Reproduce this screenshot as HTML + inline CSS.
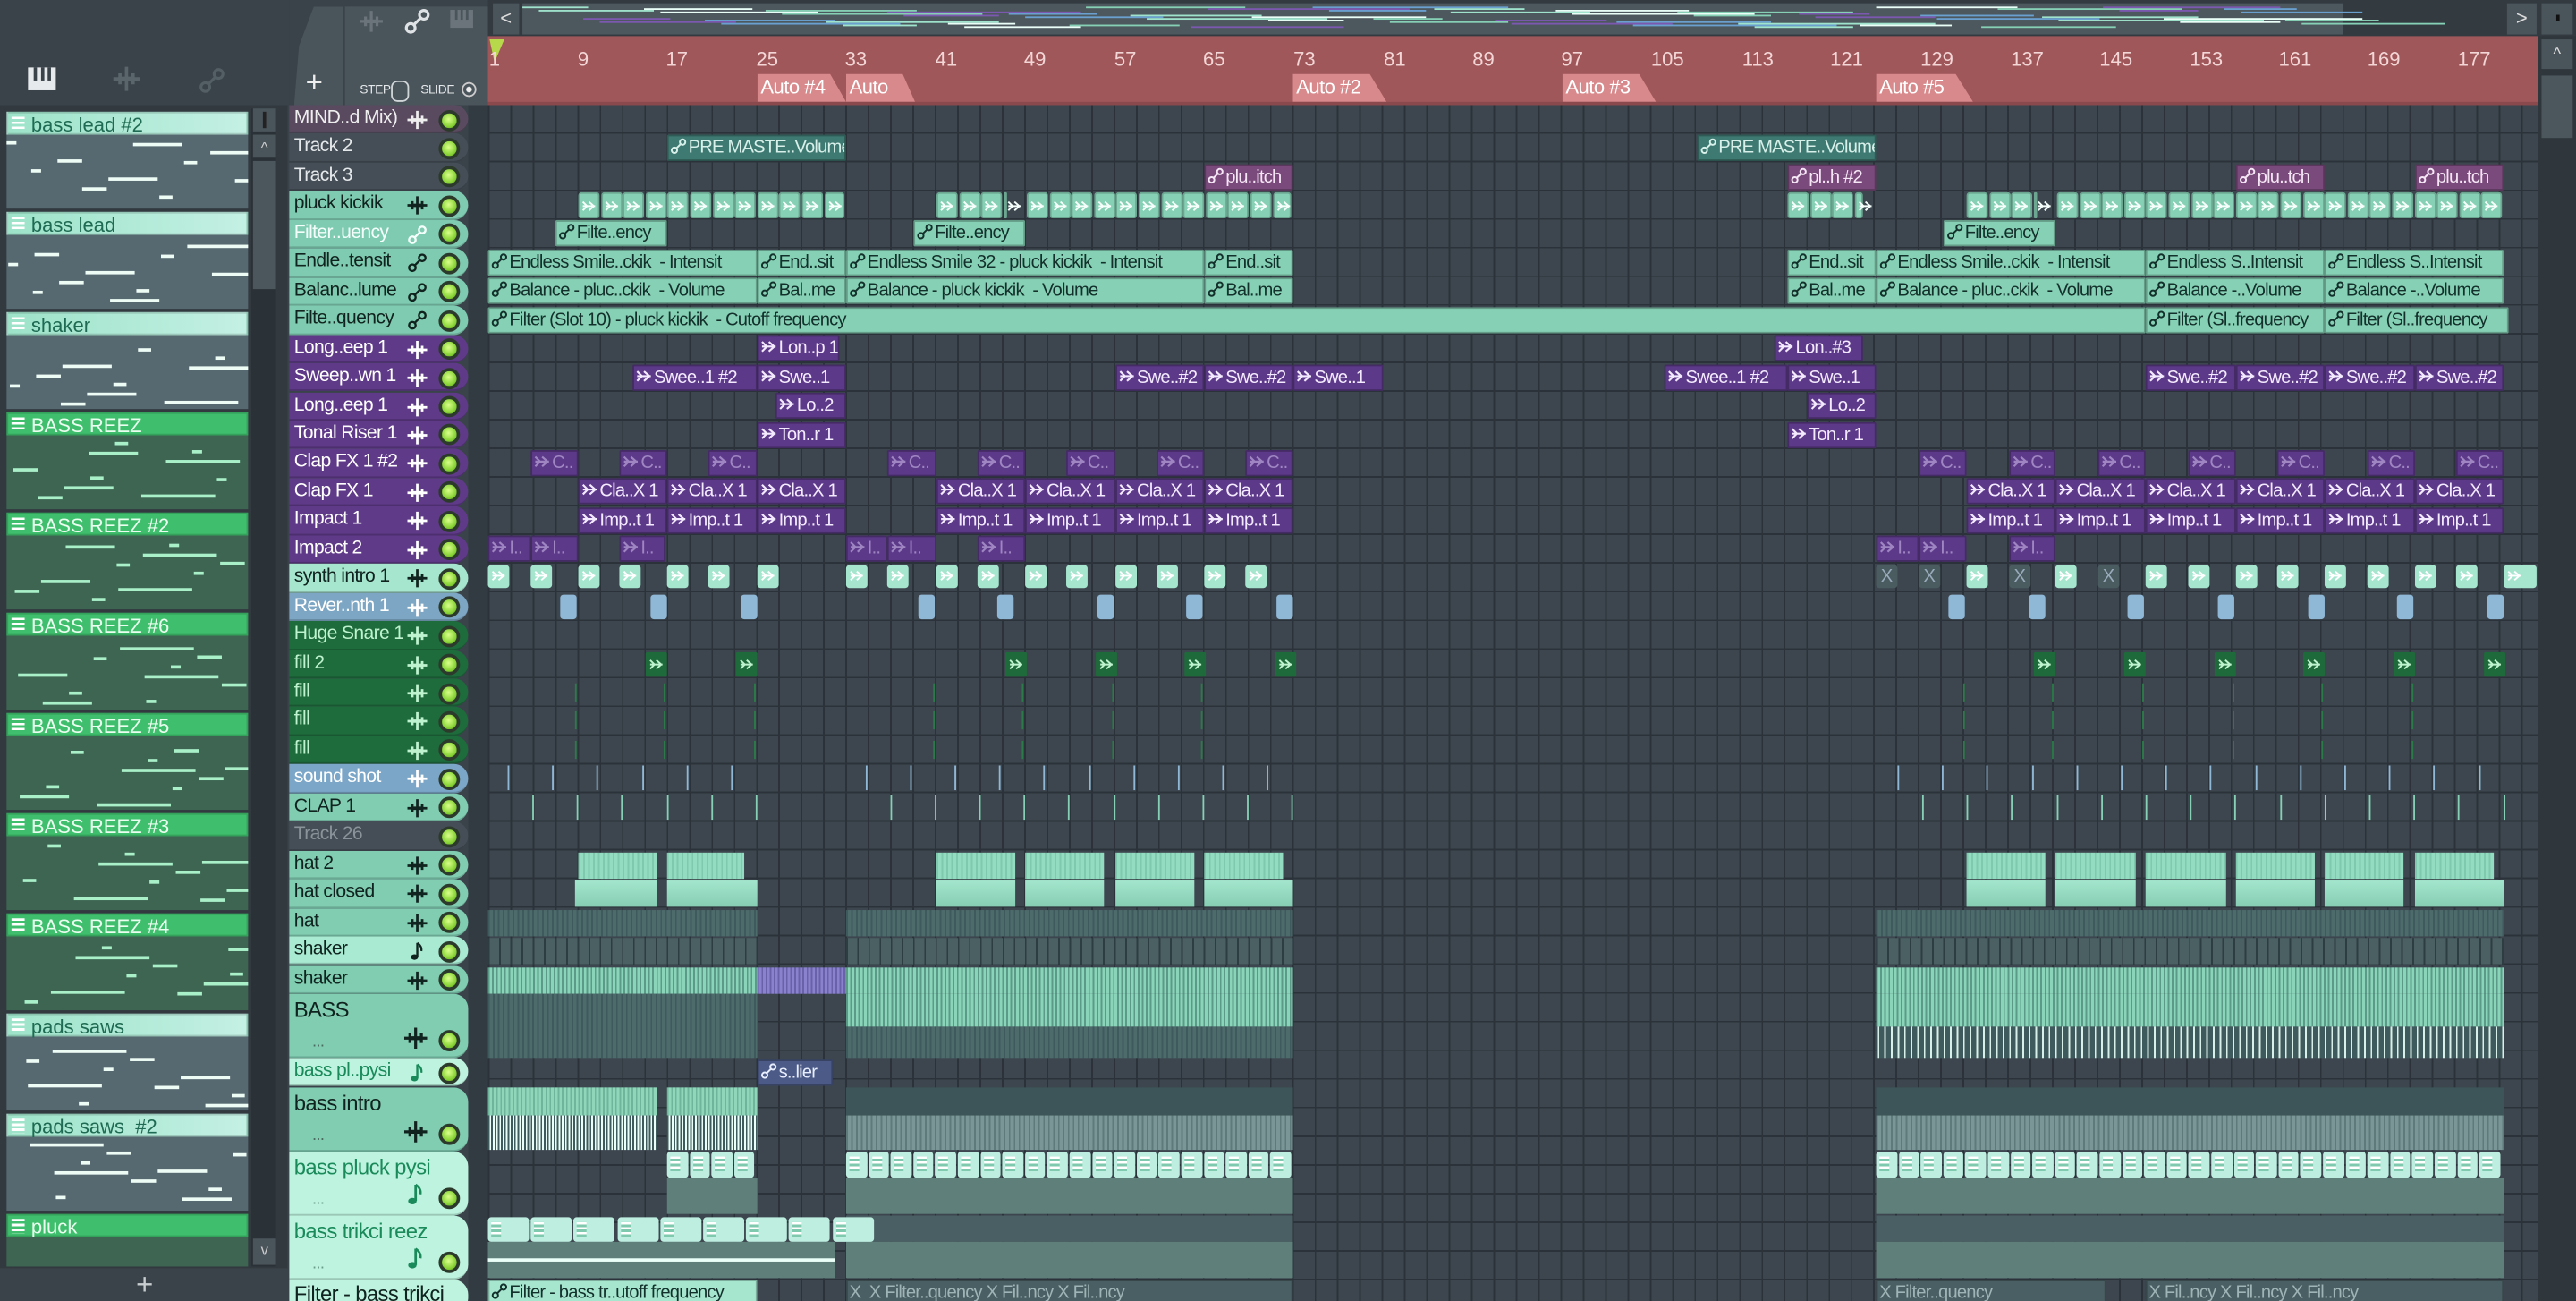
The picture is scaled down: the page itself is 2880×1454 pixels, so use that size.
<!DOCTYPE html>
<html><head><meta charset="utf-8">
<style>
html,body{margin:0;padding:0;width:2880px;height:1454px;overflow:hidden;background:#3a434a}
#root{position:absolute;left:0;top:0;width:1568px;height:792px;transform:scale(1.83673,1.83586);transform-origin:0 0;font-family:"Liberation Sans Narrow","Liberation Sans",sans-serif;overflow:hidden;background:#3a434a}
.a{position:absolute}
#grid{position:absolute;left:297px;top:64px;width:1248px;height:728px;background-color:#3d464f;
background-image:repeating-linear-gradient(90deg,#2b3239 0 1px,transparent 1px 13.6px),repeating-linear-gradient(180deg,transparent 0 16.45px,#2b3239 16.45px 17.45px);}
.th{position:absolute;left:176px;width:109px;height:17.45px;border-radius:0 9px 9px 0;font-size:11.5px;letter-spacing:-0.35px;line-height:17px;box-sizing:border-box;padding-left:3px;white-space:nowrap;border-bottom:1px solid rgba(0,0,0,.18)}
.th .ic{position:absolute;left:72px;top:3px;width:12px;height:12px}
.th .led{position:absolute;left:91px;top:2.5px;width:9px;height:9px;border-radius:50%;background:radial-gradient(circle at 45% 40%,#d9ff8a,#8ad437 60%,#5a9a20);border:2px solid #2c3a2c}
.c{position:absolute;height:16px;box-sizing:border-box;font-size:11px;letter-spacing:-0.45px;line-height:15px;white-space:nowrap;overflow:hidden;padding-left:1px;border:1px solid rgba(0,0,0,.25);border-radius:1px}
.c svg{width:10px;height:10px;vertical-align:-1px;margin-right:1px}
.t{background:#86d0b5;color:#13302a}
.dt{background:#3e7a72;color:#d8f0ea}
.pg{background:#7a4a7c;color:#f5e6f5}
.p{background:#5d3a89;color:#f4eaff}
.pd{background:#5d3a89;color:#9f86c3}
.num{position:absolute;top:29px;font-size:12px;color:#f3d6d6;width:30px;margin-left:-15px;text-align:center}
.mk{position:absolute;top:45px;height:17px;background:#d7898b;color:#fff;font-size:12px;letter-spacing:-0.3px;line-height:17px;padding-left:2px;clip-path:polygon(0 0,82% 0,100% 100%,0 100%)}
.pat{position:absolute;left:4px;width:147px;height:59px;background:#566870}
.ph{position:absolute;left:0;top:0;width:147px;height:14px;box-sizing:border-box;font-size:12px;line-height:14px;padding-left:14px;border:1px solid rgba(0,0,0,.15)}
.ph:before{content:"";position:absolute;left:2px;top:2px;width:8px;height:9px;background:repeating-linear-gradient(180deg,#fff 0 1.5px,transparent 1.5px 3px);}
.lg{background:linear-gradient(90deg,#9de3c9,#c4f0e4);color:#1f6a52}
.gg{background:#3fbf6d;color:#eaffef}
.gb{background:#3d6552}
.n{position:absolute;height:2px;background:#eefcf6}
</style></head><body><div id="root">
<svg width="0" height="0" style="position:absolute">
<defs>
<symbol id="au" viewBox="0 0 12 12"><circle cx="3" cy="9" r="2" fill="none" stroke="currentColor" stroke-width="1.3"/><circle cx="9" cy="3" r="2" fill="none" stroke="currentColor" stroke-width="1.3"/><path d="M4.4 7.6L7.6 4.4" stroke="currentColor" stroke-width="1.3"/></symbol>
<symbol id="ar" viewBox="0 0 12 12"><path d="M1 6H11M6 2.5L10 6L6 9.5M1 2.5L4.5 6L1 9.5" fill="none" stroke="currentColor" stroke-width="1.4"/></symbol>
<symbol id="wv" viewBox="0 0 12 12"><path d="M0 6H12M3 3.5V8.5M6 0.5V11.5M9 3.5V8.5M4.5 5V7M7.5 5V7" fill="none" stroke="currentColor" stroke-width="1.5"/></symbol>
<symbol id="nt" viewBox="0 0 12 12"><path d="M6 1V9.5" stroke="currentColor" stroke-width="1.3"/><ellipse cx="4.3" cy="9.6" rx="2.2" ry="1.7" fill="currentColor"/><path d="M6 1Q9 3 8.5 6" fill="none" stroke="currentColor" stroke-width="1.2"/></symbol>
</defs></svg>

<div class="a" style="left:0;top:0;width:176px;height:64px;background:#3a4349"></div>
<svg class="a" style="left:17px;top:41px" width="17" height="14" viewBox="0 0 17 14"><rect x="0" y="0" width="17" height="14" fill="#e6eaec"/><rect x="3.5" y="0" width="2" height="8" fill="#3a4349"/><rect x="8" y="0" width="2" height="8" fill="#3a4349"/><rect x="12" y="0" width="2" height="8" fill="#3a4349"/></svg>
<svg class="a" style="left:66px;top:40px;color:#59646b" width="22" height="16"><use href="#wv"/></svg>
<svg class="a" style="left:121px;top:41px;color:#535e65" width="16" height="16"><use href="#au"/></svg>
<div class="a" style="left:0;top:64px;width:175px;height:711px;background:#323a40"></div>

<div class="pat" style="top:68px"><div class="ph lg">bass lead #2</div></div>
<div class="pat" style="top:129px"><div class="ph lg">bass lead</div></div>
<div class="pat" style="top:190px"><div class="ph lg">shaker</div></div>
<div class="pat gb" style="top:251px"><div class="ph gg">BASS REEZ</div></div>
<div class="pat gb" style="top:312px"><div class="ph gg">BASS REEZ #2</div></div>
<div class="pat gb" style="top:373px"><div class="ph gg">BASS REEZ #6</div></div>
<div class="pat gb" style="top:434px"><div class="ph gg">BASS REEZ #5</div></div>
<div class="pat gb" style="top:495px"><div class="ph gg">BASS REEZ #3</div></div>
<div class="pat gb" style="top:556px"><div class="ph gg">BASS REEZ #4</div></div>
<div class="pat" style="top:617px"><div class="ph lg">pads saws</div></div>
<div class="pat" style="top:678px"><div class="ph lg">pads saws &nbsp;#2</div></div>
<div class="pat gb" style="top:739px;height:32px"><div class="ph gg">pluck</div></div>
<div id="notes"></div>
<div class="a" style="left:153px;top:66px;width:15px;height:705px;background:#2b3237"></div>
<div class="a" style="left:154px;top:66px;width:14px;height:14px;background:#4a545b"></div>
<div class="a" style="left:160px;top:68px;width:2px;height:10px;background:#222"></div>
<div class="a" style="left:154px;top:82px;width:14px;height:14px;background:#4a545b;color:#ccc;font-size:9px;text-align:center;line-height:16px">^</div>
<div class="a" style="left:154px;top:98px;width:14px;height:78px;background:#4c565d"></div>
<div class="a" style="left:154px;top:754px;width:14px;height:16px;background:#4a545b;color:#ccc;font-size:9px;text-align:center;line-height:14px">v</div>
<div class="a" style="left:0;top:772px;width:176px;height:20px;background:#3a4349;color:#c8cdd0;font-size:18px;text-align:center;line-height:20px;font-family:'Liberation Sans',sans-serif">+</div>

<div class="a" style="left:176px;top:0;width:121px;height:64px;background:#3a4349"></div>
<div class="a" style="left:179px;top:4px;width:30px;height:60px;background:#4a545b;clip-path:polygon(40% 0,100% 0,100% 100%,0 100%,10% 40%)"></div>
<div class="a" style="left:186px;top:40px;color:#eee;font-size:18px;font-family:'Liberation Sans',sans-serif">+</div>
<div class="a" style="left:210px;top:4px;width:87px;height:60px;background:#4a545b"></div>
<svg class="a" style="left:216px;top:6px;color:#6a747a" width="20" height="14"><use href="#wv"/></svg>
<svg class="a" style="left:246px;top:5px;color:#dfe3e5" width="16" height="16"><use href="#au"/></svg>
<svg class="a" style="left:274px;top:6px" width="14" height="11" viewBox="0 0 14 11"><rect width="14" height="11" fill="#6a747a"/><rect x="3" y="0" width="1.5" height="6" fill="#4a545b"/><rect x="6.3" y="0" width="1.5" height="6" fill="#4a545b"/><rect x="9.6" y="0" width="1.5" height="6" fill="#4a545b"/></svg>
<div class="a" style="left:219px;top:50px;color:#e4e8ea;font-size:7.5px;letter-spacing:-0.2px">STEP</div>
<div class="a" style="left:238px;top:49px;width:9px;height:11px;border:1.3px solid #d0d5d8;border-radius:4px"></div>
<div class="a" style="left:256px;top:50px;color:#e4e8ea;font-size:7.5px;letter-spacing:-0.2px">SLIDE</div>
<div class="a" style="left:281px;top:50px;width:7px;height:7px;border:1px solid #ccc;border-radius:50%;background:radial-gradient(#eee 30%,transparent 40%)"></div>

<div class="a" style="left:297px;top:0;width:1271px;height:22px;background:#333b41"></div>
<div class="a" style="left:300px;top:2px;width:16px;height:19px;background:#4a545b;color:#ddd;font-size:12px;text-align:center;line-height:19px">&lt;</div>
<div class="a" style="left:318px;top:2px;width:1108px;height:19px;background:#4d585e"></div>
<div id="ov" class="a" style="left:318px;top:4px;width:1108px;height:14px"></div>
<div class="a" style="left:1526px;top:2px;width:18px;height:19px;background:#4a545b;color:#ddd;font-size:12px;text-align:center;line-height:19px">&gt;</div>
<div class="a" style="left:1547px;top:2px;width:19px;height:19px;background:#4a545b"></div>
<div class="a" style="left:1556px;top:9px;width:2px;height:4px;background:#111"></div>
<div class="a" style="left:297px;top:22px;width:1248px;height:42px;background:#a0575a"></div>
<div class="a" style="left:297px;top:62px;width:1248px;height:2px;background:#8a4a4d"></div>
<svg class="a" style="left:298px;top:24px" width="9" height="14"><path d="M0 0H9L3 14Z" fill="#b6d84a"/></svg>
<div class="num" style="left:301px">1</div><div class="num" style="left:355px">9</div><div class="num" style="left:412px">17</div><div class="num" style="left:467px">25</div><div class="num" style="left:521px">33</div><div class="num" style="left:576px">41</div><div class="num" style="left:630px">49</div><div class="num" style="left:685px">57</div><div class="num" style="left:739px">65</div><div class="num" style="left:794px">73</div><div class="num" style="left:849px">81</div><div class="num" style="left:903px">89</div><div class="num" style="left:957px">97</div><div class="num" style="left:1015px">105</div><div class="num" style="left:1070px">113</div><div class="num" style="left:1124px">121</div><div class="num" style="left:1179px">129</div><div class="num" style="left:1234px">137</div><div class="num" style="left:1288px">145</div><div class="num" style="left:1343px">153</div><div class="num" style="left:1397px">161</div><div class="num" style="left:1451px">169</div><div class="num" style="left:1506px">177</div>
<div class="mk" style="left:461px;width:52px">Auto #4</div>
<div class="mk" style="left:515px;width:40px">Auto</div>
<div class="mk" style="left:787px;width:55px">Auto #2</div>
<div class="mk" style="left:951px;width:55px">Auto #3</div>
<div class="mk" style="left:1142px;width:57px">Auto #5</div>
<div class="a" style="left:1545px;top:22px;width:23px;height:770px;background:#2f373c"></div>
<div class="a" style="left:1547px;top:24px;width:19px;height:18px;background:#4a545b;color:#ddd;font-size:10px;text-align:center;line-height:20px">^</div>
<div class="a" style="left:1547px;top:46px;width:19px;height:38px;background:#4c565d"></div>

<div class="a" style="left:285px;top:64px;width:12px;height:728px;background:#333b42"></div>
<div id="grid"></div>

<div id="tracks">
<div class="th" style="top:64px;background:#594a60;color:#eee">MIND..d Mix)<svg class="ic"><use href="#wv"/></svg><i class="led"></i></div>
<div class="th" style="top:81.45px;background:#454e56;color:#e4e8ea">Track 2<i class="led"></i></div>
<div class="th" style="top:98.9px;background:#454e56;color:#e4e8ea">Track 3<i class="led"></i></div>
<div class="th" style="top:116.35px;background:#7fcbb1;color:#10231e">pluck kickik<svg class="ic"><use href="#wv"/></svg><i class="led"></i></div>
<div class="th" style="top:133.8px;background:#7fcbb1;color:#f4fffb">Filter..uency<svg class="ic"><use href="#au"/></svg><i class="led"></i></div>
<div class="th" style="top:151.25px;background:#7fcbb1;color:#10231e">Endle..tensit<svg class="ic"><use href="#au"/></svg><i class="led"></i></div>
<div class="th" style="top:168.7px;background:#7fcbb1;color:#10231e">Balanc..lume<svg class="ic"><use href="#au"/></svg><i class="led"></i></div>
<div class="th" style="top:186.15px;background:#7fcbb1;color:#10231e">Filte..quency<svg class="ic"><use href="#au"/></svg><i class="led"></i></div>
<div class="th" style="top:203.6px;background:#5f3a88;color:#fff">Long..eep 1<svg class="ic"><use href="#wv"/></svg><i class="led"></i></div>
<div class="th" style="top:221.05px;background:#5f3a88;color:#fff">Sweep..wn 1<svg class="ic"><use href="#wv"/></svg><i class="led"></i></div>
<div class="th" style="top:238.5px;background:#5f3a88;color:#fff">Long..eep 1<svg class="ic"><use href="#wv"/></svg><i class="led"></i></div>
<div class="th" style="top:255.95px;background:#5f3a88;color:#fff">Tonal Riser 1<svg class="ic"><use href="#wv"/></svg><i class="led"></i></div>
<div class="th" style="top:273.4px;background:#5f3a88;color:#fff">Clap FX 1 #2<svg class="ic"><use href="#wv"/></svg><i class="led"></i></div>
<div class="th" style="top:290.85px;background:#5f3a88;color:#fff">Clap FX 1<svg class="ic"><use href="#wv"/></svg><i class="led"></i></div>
<div class="th" style="top:308.3px;background:#5f3a88;color:#fff">Impact 1<svg class="ic"><use href="#wv"/></svg><i class="led"></i></div>
<div class="th" style="top:325.75px;background:#5f3a88;color:#fff">Impact 2<svg class="ic"><use href="#wv"/></svg><i class="led"></i></div>
<div class="th" style="top:343.2px;background:#a6e6cf;color:#10231e">synth intro 1<svg class="ic"><use href="#wv"/></svg><i class="led"></i></div>
<div class="th" style="top:360.65px;background:#7ca6c4;color:#fff">Rever..nth 1<svg class="ic"><use href="#wv"/></svg><i class="led"></i></div>
<div class="th" style="top:378.1px;background:#1e6b3c;color:#bff3cf">Huge Snare 1<svg class="ic"><use href="#wv"/></svg><i class="led"></i></div>
<div class="th" style="top:395.55px;background:#1e6b3c;color:#bff3cf">fill 2<svg class="ic"><use href="#wv"/></svg><i class="led"></i></div>
<div class="th" style="top:413px;background:#1e6b3c;color:#bff3cf">fill<svg class="ic"><use href="#wv"/></svg><i class="led"></i></div>
<div class="th" style="top:430.45px;background:#1e6b3c;color:#bff3cf">fill<svg class="ic"><use href="#wv"/></svg><i class="led"></i></div>
<div class="th" style="top:447.9px;background:#1e6b3c;color:#bff3cf">fill<svg class="ic"><use href="#wv"/></svg><i class="led"></i></div>
<div class="th" style="top:465.35px;background:#7ba6c8;color:#fff">sound shot<svg class="ic"><use href="#wv"/></svg><i class="led"></i></div>
<div class="th" style="top:482.8px;background:#80cdb2;color:#10231e">CLAP 1<svg class="ic"><use href="#wv"/></svg><i class="led"></i></div>
<div class="th" style="top:500.25px;background:#454e56;color:#8a9399">Track 26<i class="led"></i></div>
<div class="th" style="top:517.7px;background:#80cdb2;color:#10231e">hat 2<svg class="ic"><use href="#wv"/></svg><i class="led"></i></div>
<div class="th" style="top:535.15px;background:#80cdb2;color:#10231e">hat closed<svg class="ic"><use href="#wv"/></svg><i class="led"></i></div>
<div class="th" style="top:552.6px;background:#80cdb2;color:#10231e">hat<svg class="ic"><use href="#wv"/></svg><i class="led"></i></div>
<div class="th" style="top:570.05px;background:#a8ead2;color:#10231e">shaker<svg class="ic"><use href="#nt"/></svg><i class="led"></i></div>
<div class="th" style="top:587.5px;background:#80cdb2;color:#10231e">shaker<svg class="ic"><use href="#wv"/></svg><i class="led"></i></div>
<div class="th" style="top:605px;height:39px;background:#80cdb2;color:#10231e;font-size:13px;line-height:19px">BASS<span class="a" style="left:14px;top:20px;color:#4a6a60;font-size:10px">...</span><svg class="ic" style="top:20px;left:70px;width:14px;height:14px"><use href="#wv"/></svg><i class="led" style="top:22px"></i></div>
<div class="th" style="top:644px;background:#bdf3df;color:#1a8a5a">bass pl..pysi<svg class="ic"><use href="#nt"/></svg><i class="led"></i></div>
<div class="th" style="top:661.5px;height:39px;background:#80cdb2;color:#10231e;font-size:13px;line-height:19px">bass intro<span class="a" style="left:14px;top:20px;color:#4a6a60;font-size:10px">...</span><svg class="ic" style="top:20px;left:70px;width:14px;height:14px"><use href="#wv"/></svg><i class="led" style="top:22px"></i></div>
<div class="th" style="top:700.5px;height:39px;background:#bdf3df;color:#1a8a5a;font-size:13px;line-height:19px">bass pluck pysi<span class="a" style="left:14px;top:20px;color:#6a9a88;font-size:10px">...</span><svg class="ic" style="top:19px;left:70px;width:14px;height:14px"><use href="#nt"/></svg><i class="led" style="top:22px"></i></div>
<div class="th" style="top:739.5px;height:39px;background:#bdf3df;color:#1a8a5a;font-size:13px;line-height:19px">bass trikci reez<span class="a" style="left:14px;top:20px;color:#6a9a88;font-size:10px">...</span><svg class="ic" style="top:19px;left:70px;width:14px;height:14px"><use href="#nt"/></svg><i class="led" style="top:22px"></i></div>
<div class="th" style="top:778.5px;height:20px;background:#bdf3df;color:#10231e;font-size:13px">Filter - bass trikci</div>
</div>

<div id="blocks"></div>

<div class="c dt" style="left:406px;top:82px;width:109px"><svg><use href="#au"/></svg>PRE MASTE..Volume</div>
<div class="c dt" style="left:1033px;top:82px;width:109px"><svg><use href="#au"/></svg>PRE MASTE..Volume</div>
<div class="c pg" style="left:733px;top:99.5px;width:54px"><svg><use href="#au"/></svg>plu..itch</div>
<div class="c pg" style="left:1088px;top:99.5px;width:54px"><svg><use href="#au"/></svg>pl..h #2</div>
<div class="c pg" style="left:1361px;top:99.5px;width:54px"><svg><use href="#au"/></svg>plu..tch</div>
<div class="c pg" style="left:1470px;top:99.5px;width:54px"><svg><use href="#au"/></svg>plu..tch</div>

<div class="c t" style="left:338px;top:134.3px;width:68px"><svg><use href="#au"/></svg>Filte..ency</div>
<div class="c t" style="left:556px;top:134.3px;width:68px"><svg><use href="#au"/></svg>Filte..ency</div>
<div class="c t" style="left:1183px;top:134.3px;width:68px"><svg><use href="#au"/></svg>Filte..ency</div>

<div class="c t" style="left:297px;top:151.8px;width:164px"><svg><use href="#au"/></svg>Endless Smile..ckik &nbsp;- Intensit</div>
<div class="c t" style="left:461px;top:151.8px;width:54px"><svg><use href="#au"/></svg>End..sit</div>
<div class="c t" style="left:515px;top:151.8px;width:218px"><svg><use href="#au"/></svg>Endless Smile 32 - pluck kickik &nbsp;- Intensit</div>
<div class="c t" style="left:733px;top:151.8px;width:54px"><svg><use href="#au"/></svg>End..sit</div>
<div class="c t" style="left:1088px;top:151.8px;width:54px"><svg><use href="#au"/></svg>End..sit</div>
<div class="c t" style="left:1142px;top:151.8px;width:164px"><svg><use href="#au"/></svg>Endless Smile..ckik &nbsp;- Intensit</div>
<div class="c t" style="left:1306px;top:151.8px;width:109px"><svg><use href="#au"/></svg>Endless S..Intensit</div>
<div class="c t" style="left:1415px;top:151.8px;width:109px"><svg><use href="#au"/></svg>Endless S..Intensit</div>

<div class="c t" style="left:297px;top:169.2px;width:164px"><svg><use href="#au"/></svg>Balance - pluc..ckik &nbsp;- Volume</div>
<div class="c t" style="left:461px;top:169.2px;width:54px"><svg><use href="#au"/></svg>Bal..me</div>
<div class="c t" style="left:515px;top:169.2px;width:218px"><svg><use href="#au"/></svg>Balance - pluck kickik &nbsp;- Volume</div>
<div class="c t" style="left:733px;top:169.2px;width:54px"><svg><use href="#au"/></svg>Bal..me</div>
<div class="c t" style="left:1088px;top:169.2px;width:54px"><svg><use href="#au"/></svg>Bal..me</div>
<div class="c t" style="left:1142px;top:169.2px;width:164px"><svg><use href="#au"/></svg>Balance - pluc..ckik &nbsp;- Volume</div>
<div class="c t" style="left:1306px;top:169.2px;width:109px"><svg><use href="#au"/></svg>Balance -..Volume</div>
<div class="c t" style="left:1415px;top:169.2px;width:109px"><svg><use href="#au"/></svg>Balance -..Volume</div>

<div class="c t" style="left:297px;top:186.7px;width:1009px"><svg><use href="#au"/></svg>Filter (Slot 10) - pluck kickik &nbsp;- Cutoff frequency</div>
<div class="c t" style="left:1306px;top:186.7px;width:109px"><svg><use href="#au"/></svg>Filter (Sl..frequency</div>
<div class="c t" style="left:1415px;top:186.7px;width:112px"><svg><use href="#au"/></svg>Filter (Sl..frequency</div>

<div class="c p" style="left:461px;top:204.1px;width:50px"><svg><use href="#ar"/></svg>Lon..p 1</div>
<div class="c p" style="left:1080px;top:204.1px;width:54px"><svg><use href="#ar"/></svg>Lon..#3</div>

<div class="c p" style="left:385px;top:221.6px;width:76px"><svg><use href="#ar"/></svg>Swee..1 #2</div>
<div class="c p" style="left:461px;top:221.6px;width:54px"><svg><use href="#ar"/></svg>Swe..1</div>
<div class="c p" style="left:679px;top:221.6px;width:54px"><svg><use href="#ar"/></svg>Swe..#2</div>
<div class="c p" style="left:733px;top:221.6px;width:54px"><svg><use href="#ar"/></svg>Swe..#2</div>
<div class="c p" style="left:787px;top:221.6px;width:55px"><svg><use href="#ar"/></svg>Swe..1</div>
<div class="c p" style="left:1013px;top:221.6px;width:75px"><svg><use href="#ar"/></svg>Swee..1 #2</div>
<div class="c p" style="left:1088px;top:221.6px;width:54px"><svg><use href="#ar"/></svg>Swe..1</div>
<div class="c p" style="left:1306px;top:221.6px;width:55px"><svg><use href="#ar"/></svg>Swe..#2</div>
<div class="c p" style="left:1361px;top:221.6px;width:54px"><svg><use href="#ar"/></svg>Swe..#2</div>
<div class="c p" style="left:1415px;top:221.6px;width:55px"><svg><use href="#ar"/></svg>Swe..#2</div>
<div class="c p" style="left:1470px;top:221.6px;width:54px"><svg><use href="#ar"/></svg>Swe..#2</div>

<div class="c p" style="left:472px;top:239px;width:43px"><svg><use href="#ar"/></svg>Lo..2</div>
<div class="c p" style="left:1100px;top:239px;width:42px"><svg><use href="#ar"/></svg>Lo..2</div>
<div class="c p" style="left:461px;top:256.5px;width:54px"><svg><use href="#ar"/></svg>Ton..r 1</div>
<div class="c p" style="left:1088px;top:256.5px;width:54px"><svg><use href="#ar"/></svg>Ton..r 1</div>

<div class="c pd" style="left:323px;top:274px;width:29px"><svg><use href="#ar"/></svg>C..</div>
<div class="c pd" style="left:377px;top:274px;width:29px"><svg><use href="#ar"/></svg>C..</div>
<div class="c pd" style="left:431px;top:274px;width:30px"><svg><use href="#ar"/></svg>C..</div>
<div class="c pd" style="left:540px;top:274px;width:30px"><svg><use href="#ar"/></svg>C..</div>
<div class="c pd" style="left:595px;top:274px;width:29px"><svg><use href="#ar"/></svg>C..</div>
<div class="c pd" style="left:649px;top:274px;width:30px"><svg><use href="#ar"/></svg>C..</div>
<div class="c pd" style="left:704px;top:274px;width:29px"><svg><use href="#ar"/></svg>C..</div>
<div class="c pd" style="left:758px;top:274px;width:29px"><svg><use href="#ar"/></svg>C..</div>
<div class="c pd" style="left:1168px;top:274px;width:29px"><svg><use href="#ar"/></svg>C..</div>
<div class="c pd" style="left:1223px;top:274px;width:28px"><svg><use href="#ar"/></svg>C..</div>
<div class="c pd" style="left:1277px;top:274px;width:29px"><svg><use href="#ar"/></svg>C..</div>
<div class="c pd" style="left:1332px;top:274px;width:29px"><svg><use href="#ar"/></svg>C..</div>
<div class="c pd" style="left:1386px;top:274px;width:29px"><svg><use href="#ar"/></svg>C..</div>
<div class="c pd" style="left:1441px;top:274px;width:29px"><svg><use href="#ar"/></svg>C..</div>
<div class="c pd" style="left:1495px;top:274px;width:29px"><svg><use href="#ar"/></svg>C..</div>

<div class="c p" style="left:352px;top:291.4px;width:54px"><svg><use href="#ar"/></svg>Cla..X 1</div>
<div class="c p" style="left:406px;top:291.4px;width:55px"><svg><use href="#ar"/></svg>Cla..X 1</div>
<div class="c p" style="left:461px;top:291.4px;width:54px"><svg><use href="#ar"/></svg>Cla..X 1</div>
<div class="c p" style="left:570px;top:291.4px;width:54px"><svg><use href="#ar"/></svg>Cla..X 1</div>
<div class="c p" style="left:624px;top:291.4px;width:55px"><svg><use href="#ar"/></svg>Cla..X 1</div>
<div class="c p" style="left:679px;top:291.4px;width:54px"><svg><use href="#ar"/></svg>Cla..X 1</div>
<div class="c p" style="left:733px;top:291.4px;width:54px"><svg><use href="#ar"/></svg>Cla..X 1</div>
<div class="c p" style="left:1197px;top:291.4px;width:54px"><svg><use href="#ar"/></svg>Cla..X 1</div>
<div class="c p" style="left:1251px;top:291.4px;width:55px"><svg><use href="#ar"/></svg>Cla..X 1</div>
<div class="c p" style="left:1306px;top:291.4px;width:55px"><svg><use href="#ar"/></svg>Cla..X 1</div>
<div class="c p" style="left:1361px;top:291.4px;width:54px"><svg><use href="#ar"/></svg>Cla..X 1</div>
<div class="c p" style="left:1415px;top:291.4px;width:55px"><svg><use href="#ar"/></svg>Cla..X 1</div>
<div class="c p" style="left:1470px;top:291.4px;width:54px"><svg><use href="#ar"/></svg>Cla..X 1</div>

<div class="c p" style="left:352px;top:308.8px;width:54px"><svg><use href="#ar"/></svg>Imp..t 1</div>
<div class="c p" style="left:406px;top:308.8px;width:55px"><svg><use href="#ar"/></svg>Imp..t 1</div>
<div class="c p" style="left:461px;top:308.8px;width:54px"><svg><use href="#ar"/></svg>Imp..t 1</div>
<div class="c p" style="left:570px;top:308.8px;width:54px"><svg><use href="#ar"/></svg>Imp..t 1</div>
<div class="c p" style="left:624px;top:308.8px;width:55px"><svg><use href="#ar"/></svg>Imp..t 1</div>
<div class="c p" style="left:679px;top:308.8px;width:54px"><svg><use href="#ar"/></svg>Imp..t 1</div>
<div class="c p" style="left:733px;top:308.8px;width:54px"><svg><use href="#ar"/></svg>Imp..t 1</div>
<div class="c p" style="left:1197px;top:308.8px;width:54px"><svg><use href="#ar"/></svg>Imp..t 1</div>
<div class="c p" style="left:1251px;top:308.8px;width:55px"><svg><use href="#ar"/></svg>Imp..t 1</div>
<div class="c p" style="left:1306px;top:308.8px;width:55px"><svg><use href="#ar"/></svg>Imp..t 1</div>
<div class="c p" style="left:1361px;top:308.8px;width:54px"><svg><use href="#ar"/></svg>Imp..t 1</div>
<div class="c p" style="left:1415px;top:308.8px;width:55px"><svg><use href="#ar"/></svg>Imp..t 1</div>
<div class="c p" style="left:1470px;top:308.8px;width:54px"><svg><use href="#ar"/></svg>Imp..t 1</div>

<div class="c pd" style="left:297px;top:326.3px;width:26px"><svg><use href="#ar"/></svg>I..</div>
<div class="c pd" style="left:323px;top:326.3px;width:29px"><svg><use href="#ar"/></svg>I..</div>
<div class="c pd" style="left:377px;top:326.3px;width:28px"><svg><use href="#ar"/></svg>I..</div>
<div class="c pd" style="left:515px;top:326.3px;width:25px"><svg><use href="#ar"/></svg>I..</div>
<div class="c pd" style="left:540px;top:326.3px;width:30px"><svg><use href="#ar"/></svg>I..</div>
<div class="c pd" style="left:595px;top:326.3px;width:29px"><svg><use href="#ar"/></svg>I..</div>
<div class="c pd" style="left:1142px;top:326.3px;width:26px"><svg><use href="#ar"/></svg>I..</div>
<div class="c pd" style="left:1168px;top:326.3px;width:29px"><svg><use href="#ar"/></svg>I..</div>
<div class="c pd" style="left:1223px;top:326.3px;width:28px"><svg><use href="#ar"/></svg>I..</div>

<div class="c" style="left:461px;top:644.5px;width:46px;background:#4b5a86;color:#e8eeff"><svg><use href="#au"/></svg>s..lier</div>
<div class="c t" style="left:297px;top:779px;width:164px;height:14px;background:#a6e6cf"><svg><use href="#au"/></svg>Filter - bass tr..utoff frequency</div>
<div class="c" style="left:1142px;top:779px;width:140px;height:14px;background:#4a5f63;color:#9fb4b6">X Filter..quency</div>
<div class="c" style="left:1306px;top:779px;width:218px;height:14px;background:#4a5f63;color:#9fb4b6">X Fil..ncy X Fil..ncy X Fil..ncy</div>
<div class="c" style="left:515px;top:779px;width:272px;height:14px;background:#4a5f63;color:#9fb4b6">X &nbsp;X Filter..quency X Fil..ncy X Fil..ncy</div>

<script>
(function(){
var B=document.getElementById('blocks');
function d(l,t,w,h,bg,extra){var e=document.createElement('div');e.className='a';e.style.cssText='left:'+l+'px;top:'+t+'px;width:'+w+'px;height:'+h+'px;background:'+bg+';'+(extra||'');B.appendChild(e);return e;}
var R=function(i){return 64+i*17.45;};
[[352,515],[570,613],[625,787],[1088,1135],[1197,1240],[1252,1524]].forEach(function(r){
 for(var x=r[0];x<r[1]-2;x+=13.6){var e=d(x,R(3)+0.5,Math.min(13,r[1]-x-0.6),16,'#86d0b5','border-radius:2px;border:1px solid rgba(0,0,0,.2);box-sizing:border-box;color:#f6fffb');
 e.innerHTML='<svg style="width:9px;height:9px;margin:3px 1px" viewBox="0 0 12 12"><use href="#ar"/></svg>';}
});
var si=[297,323,352,377,406,431,461,515,540,570,595,624,649,679,704,733,758,1197,1251,1306,1332,1361,1386,1415,1441,1470,1495,1524];
si.forEach(function(x){var e=d(x,R(16)+1,x==1524?20:13,14,'#a6e6cf','border-radius:2px;color:#fff');e.innerHTML='<svg style="width:9px;height:9px;margin:2px" viewBox="0 0 12 12"><use href="#ar"/></svg>';});
[1142,1168,1223,1277].forEach(function(x){var e=d(x,R(16)+1,13,14,'#4a5c60','border-radius:2px;color:#9ab;font-size:11px;text-align:center;line-height:14px');e.textContent='X';});
[341,396,451,559,607,668,722,777,1186,1235,1295,1350,1405,1459,1514].forEach(function(x){d(x,R(17)+1,10,15,'#8fb8d6','border-radius:2px');});
[393,448,612,667,721,776,1238,1293,1348,1402,1457,1512].forEach(function(x){var e=d(x,R(19)+1,13,15,'#1f6a3a','border-radius:1px;color:#bff3cf');e.innerHTML='<svg style="width:9px;height:9px;margin:3px 2px" viewBox="0 0 12 12"><use href="#ar"/></svg>';});
for(var r=20;r<=22;r++){[352,406,461,570,624,679,733,1197,1251,1306,1361,1415,1470].forEach(function(x){d(x-2,R(r)+3,1,11,'#2b7b48');});}
for(var x=299;x<787;x+=27.2){if(x>461&&x<515)continue;d(x+10,R(23)+1,1,15,'#8fb8d6');d(x+25,R(24)+1,1,15,'#86d0b5');}
for(var x=1145;x<1524;x+=27.2){d(x+10,R(23)+1,1,15,'#8fb8d6');d(x+25,R(24)+1,1,15,'#86d0b5');}
var hs='repeating-linear-gradient(90deg,#7fc9ae 0 1px,#93dcc1 1px 3px)';
[[352,400],[406,453],[570,618],[624,672],[679,727],[733,781],[1197,1245],[1251,1300],[1306,1355],[1361,1409],[1415,1463],[1470,1518]].forEach(function(r){d(r[0],R(26)+1,r[1]-r[0],16,hs);});
[[350,400],[406,461],[570,618],[624,672],[679,727],[733,787],[1197,1245],[1251,1300],[1306,1355],[1361,1409],[1415,1463],[1470,1524]].forEach(function(r){d(r[0],R(27)+1,r[1]-r[0],16,'linear-gradient(#a3e6cd,#86cdb3)');});
var dk='repeating-linear-gradient(90deg,#3f5a5c 0 1px,#4e6b6c 1px 3px)';
[[297,461],[515,787],[1142,1524]].forEach(function(r){
 d(r[0],R(28)+1,r[1]-r[0],16,dk);
 d(r[0],R(29)+1,r[1]-r[0],16,'repeating-linear-gradient(90deg,#2d3d41 0 1px,#4a6062 1px 6.8px)');
 d(r[0],R(30)+1,r[1]-r[0],16,'repeating-linear-gradient(90deg,#5c9a88 0 1px,#8ad4b9 1px 2.5px)');
});
d(461,R(30)+1,54,16,'repeating-linear-gradient(90deg,#6a62a8 0 1px,#8a82cc 1px 2.5px)');
d(297,605,164,39,dk);d(515,605,272,20,'repeating-linear-gradient(90deg,#5c9a88 0 1px,#8ad4b9 1px 2.5px)');d(515,625,272,19,dk);
d(1142,605,382,20,'repeating-linear-gradient(90deg,#5c9a88 0 1px,#8ad4b9 1px 2.5px)');d(1142,625,382,19,'repeating-linear-gradient(90deg,#3f5a5c 0 1px,#d8f0ea 1px 2px,#3f5a5c 2px 4px)');
[[297,400],[406,461]].forEach(function(r){d(r[0],662,r[1]-r[0],17,'repeating-linear-gradient(90deg,#6fb59c 0 1px,#8fd6bb 1px 2.5px)');d(r[0],679,r[1]-r[0],21,'repeating-linear-gradient(90deg,#3f5a5c 0 1px,#eafff8 1px 2px)');});
[[515,787],[1142,1524]].forEach(function(r){d(r[0],662,r[1]-r[0],17,'#3d5558');d(r[0],679,r[1]-r[0],21,'repeating-linear-gradient(90deg,#5e7a7a 0 1px,#7a9696 1px 3px)');
 d(r[0],740,r[1]-r[0],16,'#4a5f63');d(r[0],756,r[1]-r[0],22,'#5f807a');});
[[406,461],[515,787],[1142,1524]].forEach(function(r){for(var x=r[0];x<r[1]-3;x+=13.6){var e=d(x,701,12.6,16,'#bdeee0','border-radius:2px');e.innerHTML='<div style="margin:3px 2px;width:6px;height:9px;background:repeating-linear-gradient(180deg,#fff 0 1.5px,#7fc9ae 1.5px 3px)"></div>';}d(r[0],717,r[1]-r[0],22,'#5f807a');});
for(var x=297;x<508;x+=26.2){var e=d(x,741,25,15,'#bdeee0','border-radius:2px');e.innerHTML='<div style="margin:3px 2px;width:6px;height:9px;background:repeating-linear-gradient(180deg,#fff 0 1.5px,#7fc9ae 1.5px 3px)"></div>';}
d(297,756,211,22,'#5f807a');d(297,766,211,2,'#eafff8');
var ov=document.getElementById('ov');
var cols=['#9fe3cc','#7c58b0','#eafff8','#6aa0d0','#86d0b5'];
for(var i=0;i<60;i++){var e=document.createElement('div');e.className='a';var y=(i*7)%13;e.style.cssText='left:'+((i*37)%1100)+'px;top:'+y+'px;width:'+(40+(i*13)%90)+'px;height:1px;background:'+cols[i%5];ov.appendChild(e);}
var N=document.getElementById('notes');
var tops=[68,129,190,251,312,373,434,495,556,617,678];
tops.forEach(function(t,k){for(var j=0;j<10;j++){var e=document.createElement('div');e.className='n';var w=[6,15,30,8,45][ (j+k)%5];var l=4+((j*31+k*17)%140);e.style.cssText+=';left:'+l+'px;top:'+(t+18+((j*11+k*7)%38))+'px;width:'+Math.min(w,151-l)+'px;background:'+(k>=3&&k<=8?'#a9f0c9':'#eefcf6');N.appendChild(e);}});
})();
</script>
</div></body></html>
